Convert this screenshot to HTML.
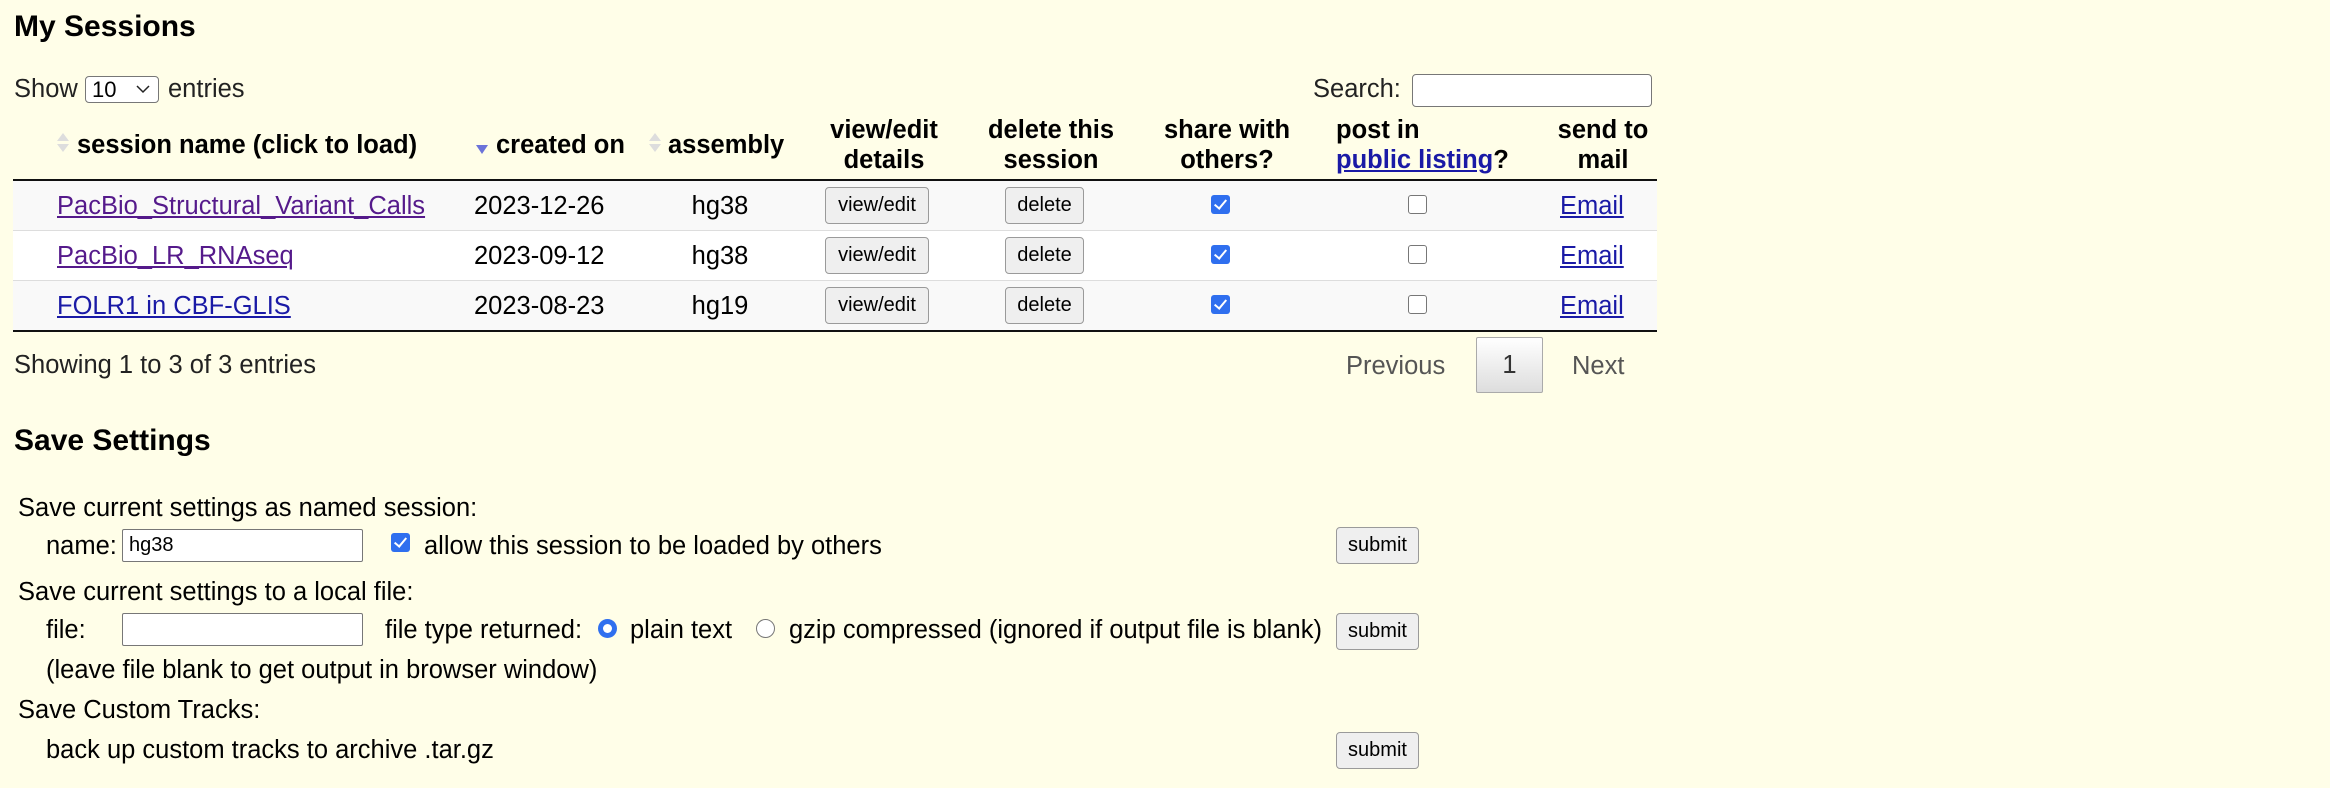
<!DOCTYPE html>
<html><head><meta charset="utf-8"><style>
body{margin:0;width:2330px;height:788px;background:#fffee8;font-family:"Liberation Sans",Arial,sans-serif;color:#000;position:relative;overflow:hidden}
.a{position:absolute;white-space:nowrap;line-height:30px;font-size:25.5px}
.h{font-weight:bold;font-size:30px;line-height:36px}
.b{font-weight:bold}
.c{transform:translateX(-50%);text-align:center}
.row{position:absolute;left:13px;width:1644px;height:50px}
.btn{position:absolute;background:#efefef;border:1.5px solid #9a9a9a;border-radius:4px;font-size:20px;line-height:34px;text-align:center;box-sizing:border-box;color:#000}
.cb{position:absolute;width:19px;height:19px;border-radius:3px;box-sizing:border-box}
.on{background:#2f6fef}
.on:after{content:"";position:absolute;left:6px;top:2px;width:5px;height:10px;border:solid #fff;border-width:0 2.5px 2.5px 0;transform:rotate(40deg)}
.off{border:1.5px solid #777;background:#fff}
.inp{position:absolute;background:#fff;border:1.5px solid #777;border-radius:2px;box-sizing:border-box}
a{text-decoration:underline}
.v{color:#551a8b}.l{color:#1a1aa6}
.sort{position:absolute;width:0;height:0;border-left:6px solid transparent;border-right:6px solid transparent}
</style></head><body>
<div class="a h" style="left:14px;top:9px">My Sessions</div>
<div class="a" style="left:14px;top:74px;color:#222">Show</div>
<div class="inp" style="left:85px;top:76px;width:74px;height:27px;border-radius:4px;font-size:22px;line-height:25px;padding-left:6px">10<svg style="position:absolute;right:8px;top:8px" width="14" height="9" viewBox="0 0 14 9"><path d="M1 1 L7 7 L13 1" fill="none" stroke="#222" stroke-width="1.5"/></svg></div>
<div class="a" style="left:168px;top:74px;color:#222">entries</div>
<div class="a" style="left:1313px;top:74px;color:#222">Search:</div>
<div class="inp" style="left:1412px;top:74px;width:240px;height:33px;border-radius:4px"></div>

<div class="sort" style="left:57px;top:133px;border-bottom:8px solid #ddd"></div>
<div class="sort" style="left:57px;top:144px;border-top:8px solid #ddd"></div>
<div class="a b" style="left:77px;top:130px">session name (click to load)</div>
<div class="sort" style="left:476px;top:145px;border-top:9px solid #6b73d9"></div>
<div class="a b" style="left:496px;top:130px">created on</div>
<div class="sort" style="left:649px;top:133px;border-bottom:8px solid #ddd"></div>
<div class="sort" style="left:649px;top:144px;border-top:8px solid #ddd"></div>
<div class="a b" style="left:668px;top:130px">assembly</div>
<div class="a b c" style="left:884px;top:115px">view/edit<br>details</div>
<div class="a b c" style="left:1051px;top:115px">delete this<br>session</div>
<div class="a b c" style="left:1227px;top:115px">share with<br>others?</div>
<div class="a b" style="left:1336px;top:115px">post in<br><a class="l">public listing</a>?</div>
<div class="a b c" style="left:1603px;top:115px">send to<br>mail</div>
<div style="position:absolute;left:13px;top:179px;width:1644px;height:2px;background:#111"></div>

<div class="row" style="top:181px;background:#f9f9f9"></div>
<div class="row" style="top:230px;background:#fff;border-top:1.5px solid #ddd"></div>
<div class="row" style="top:280px;background:#f9f9f9;border-top:1.5px solid #ddd"></div>
<div style="position:absolute;left:13px;top:330px;width:1644px;height:2px;background:#111"></div>

<div class="a" style="left:57px;top:191px"><a class="v">PacBio_Structural_Variant_Calls</a></div>
<div class="a" style="left:57px;top:241px"><a class="v">PacBio_LR_RNAseq</a></div>
<div class="a" style="left:57px;top:291px"><a class="l">FOLR1 in CBF-GLIS</a></div>
<div class="a" style="left:474px;top:191px">2023-12-26</div>
<div class="a" style="left:474px;top:241px">2023-09-12</div>
<div class="a" style="left:474px;top:291px">2023-08-23</div>
<div class="a c" style="left:720px;top:191px">hg38</div>
<div class="a c" style="left:720px;top:241px">hg38</div>
<div class="a c" style="left:720px;top:291px">hg19</div>
<div class="btn" style="left:825px;top:187px;width:104px;height:37px">view/edit</div>
<div class="btn" style="left:825px;top:237px;width:104px;height:37px">view/edit</div>
<div class="btn" style="left:825px;top:287px;width:104px;height:37px">view/edit</div>
<div class="btn" style="left:1005px;top:187px;width:79px;height:37px">delete</div>
<div class="btn" style="left:1005px;top:237px;width:79px;height:37px">delete</div>
<div class="btn" style="left:1005px;top:287px;width:79px;height:37px">delete</div>
<div class="cb on" style="left:1211px;top:195px"></div>
<div class="cb on" style="left:1211px;top:245px"></div>
<div class="cb on" style="left:1211px;top:295px"></div>
<div class="cb off" style="left:1408px;top:195px"></div>
<div class="cb off" style="left:1408px;top:245px"></div>
<div class="cb off" style="left:1408px;top:295px"></div>
<div class="a" style="left:1560px;top:191px"><a class="l">Email</a></div>
<div class="a" style="left:1560px;top:241px"><a class="l">Email</a></div>
<div class="a" style="left:1560px;top:291px"><a class="l">Email</a></div>

<div class="a" style="left:14px;top:350px;color:#222">Showing 1 to 3 of 3 entries</div>
<div class="a" style="left:1346px;top:351px;color:#555">Previous</div>
<div style="position:absolute;left:1476px;top:337px;width:67px;height:56px;box-sizing:border-box;border:1.5px solid #aaa;border-radius:2px;background:linear-gradient(#fff,#ddd);font-size:25.5px;line-height:55px;text-align:center;color:#333">1</div>
<div class="a" style="left:1572px;top:351px;color:#555">Next</div>

<div class="a h" style="left:14px;top:423px">Save Settings</div>
<div class="a" style="left:18px;top:493px">Save current settings as named session:</div>
<div class="a" style="left:46px;top:531px">name:</div>
<div class="inp" style="left:122px;top:529px;width:241px;height:33px;font-size:20px;line-height:30px;padding-left:6px">hg38</div>
<div class="cb on" style="left:391px;top:533px"></div>
<div class="a" style="left:424px;top:531px">allow this session to be loaded by others</div>
<div class="btn" style="left:1336px;top:527px;width:83px;height:37px">submit</div>
<div class="a" style="left:18px;top:577px">Save current settings to a local file:</div>
<div class="a" style="left:46px;top:615px">file:</div>
<div class="inp" style="left:122px;top:613px;width:241px;height:33px"></div>
<div class="a" style="left:385px;top:615px">file type returned:</div>
<div style="position:absolute;left:598px;top:619px;width:19px;height:19px;border-radius:50%;background:#2f6fef"><div style="position:absolute;left:5px;top:5px;width:9px;height:9px;border-radius:50%;background:#fff"></div></div>
<div class="a" style="left:630px;top:615px">plain text</div>
<div style="position:absolute;left:756px;top:619px;width:19px;height:19px;border-radius:50%;border:1.5px solid #777;background:#fff;box-sizing:border-box"></div>
<div class="a" style="left:789px;top:615px">gzip compressed (ignored if output file is blank)</div>
<div class="btn" style="left:1336px;top:613px;width:83px;height:37px">submit</div>
<div class="a" style="left:46px;top:655px">(leave file blank to get output in browser window)</div>
<div class="a" style="left:18px;top:695px">Save Custom Tracks:</div>
<div class="a" style="left:46px;top:735px">back up custom tracks to archive .tar.gz</div>
<div class="btn" style="left:1336px;top:732px;width:83px;height:37px">submit</div>
</body></html>
